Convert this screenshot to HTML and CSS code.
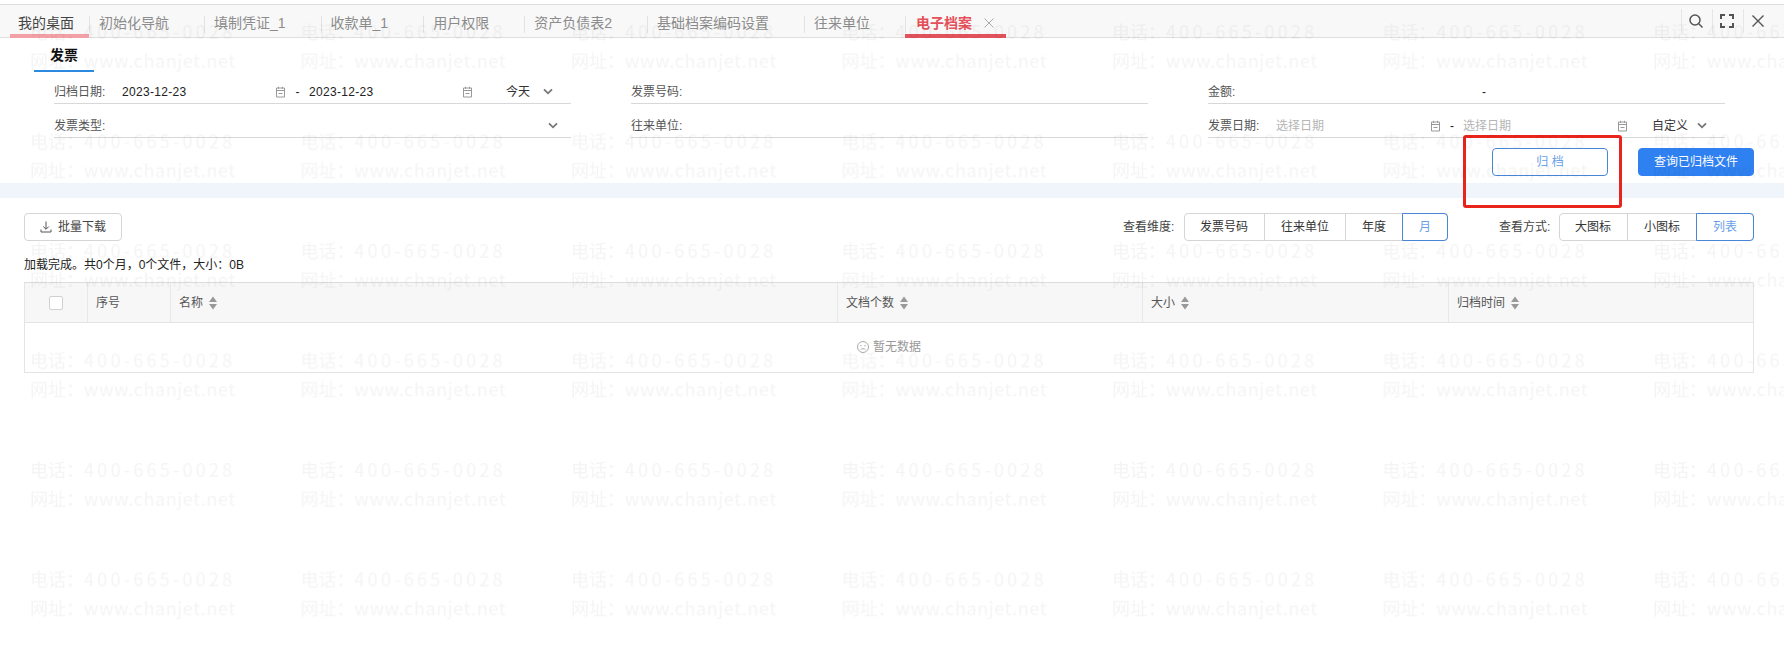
FILE: index.html
```html
<!DOCTYPE html>
<html lang="zh-CN">
<head>
<meta charset="utf-8">
<title>电子档案</title>
<link rel="stylesheet" href="styles.css">
</head>
<body>
<svg class="defs" width="0" height="0" aria-hidden="true">
  <symbol id="cal" viewBox="0 0 11 12"><path d="M1.500 2h8v9h-8zM1.500 4.500h8M3.500 .8v2M7.500 .8v2M3.500 7.500h4" fill="none" stroke="#999" stroke-width="1"/></symbol>
  <symbol id="chev" viewBox="0 0 10 7"><path d="M1 1.300l4 4 4-4" fill="none" stroke="#777" stroke-width="1.800"/></symbol>
  <symbol id="sort" viewBox="0 0 8 14"><path d="M4 .5l4 5.500H0zM4 13.500L0 8h8z" fill="#999"/></symbol>
</svg>
<div class="app">
  <header class="tabbar">
    <nav class="tabs">
      <a class="tab tab-home">我的桌面</a>
      <a class="tab">初始化导航</a>
      <a class="tab">填制凭证_1</a>
      <a class="tab">收款单_1</a>
      <a class="tab">用户权限</a>
      <a class="tab">资产负债表2</a>
      <a class="tab">基础档案编码设置</a>
      <a class="tab">往来单位</a>
      <a class="tab tab-active">电子档案<svg class="tab-x" width="10" height="10" viewBox="0 0 10 10"><path d="M.5.500l9 9M9.500.500l-9 9" stroke="#aaa" fill="none"/></svg></a>
    </nav>
    <div class="tools">
      <span class="tool"><svg width="16" height="16" viewBox="0 0 16 16"><circle cx="7" cy="7" r="5" fill="none" stroke="#555" stroke-width="1.500"/><path d="M10.800 10.800L14.500 14.500" stroke="#555" stroke-width="1.500"/></svg></span>
      <span class="tool"><svg width="14" height="14" viewBox="0 0 14 14"><path d="M1 5V1h4M9 1h4v4M13 9v4H9M5 13H1V9" fill="none" stroke="#555" stroke-width="2"/></svg></span>
      <span class="tool"><svg width="14" height="14" viewBox="0 0 14 14"><path d="M1.500 1.500l11 11M12.500 1.500l-11 11" fill="none" stroke="#555" stroke-width="1.400"/></svg></span>
    </div>
  </header>

  <div class="subtabs"><span class="subtab">发票</span></div>

  <section class="filters">
    <div class="field">
      <label class="label">归档日期:</label>
      <span class="date"><span>2023-12-23</span><svg class="cal"><use href="#cal"/></svg></span>
      <span class="dash">-</span>
      <span class="date"><span>2023-12-23</span><svg class="cal"><use href="#cal"/></svg></span>
      <span class="preset">今天<svg class="chev"><use href="#chev"/></svg></span>
    </div>
    <div class="field"><label class="label">发票号码:</label></div>
    <div class="field">
      <label class="label">金额:</label>
      <span class="amount-dash">-</span>
    </div>
    <div class="field">
      <label class="label">发票类型:</label>
      <svg class="chev chev-select"><use href="#chev"/></svg>
    </div>
    <div class="field"><label class="label">往来单位:</label></div>
    <div class="field">
      <label class="label">发票日期:</label>
      <span class="date date-empty"><span>选择日期</span><svg class="cal"><use href="#cal"/></svg></span>
      <span class="dash dash-tight">-</span>
      <span class="date date-empty"><span>选择日期</span><svg class="cal"><use href="#cal"/></svg></span>
      <span class="preset preset-wide">自定义<svg class="chev"><use href="#chev"/></svg></span>
    </div>
  </section>

  <div class="actions">
    <button class="btn btn-outline">归 档</button>
    <button class="btn btn-primary">查询已归档文件</button>
  </div>

  <div class="band"></div>

  <div class="toolbar">
    <button class="btn btn-download"><svg width="12" height="12" viewBox="0 0 12 12"><path d="M6 .5v7.500M3.200 5.500L6 8.300l2.800-2.800M1 8.500v2.500h10V8.500" fill="none" stroke="#555"/></svg>批量下载</button>
    <div class="view-controls">
      <span class="view-label">查看维度:</span>
      <div class="seg">
        <span class="seg-item">发票号码</span>
        <span class="seg-item">往来单位</span>
        <span class="seg-item">年度</span>
        <span class="seg-item seg-on">月</span>
      </div>
      <span class="view-label view-label-second">查看方式:</span>
      <div class="seg">
        <span class="seg-item">大图标</span>
        <span class="seg-item">小图标</span>
        <span class="seg-item seg-on">列表</span>
      </div>
    </div>
  </div>

  <p class="status">加载完成。共0个月&#xFF0C;0个文件&#xFF0C;大小&#xFF1A;0B</p>

  <section class="table">
    <div class="thead">
      <div class="th th-check"><span class="checkbox"></span></div>
      <div class="th">序号</div>
      <div class="th">名称<svg class="sort"><use href="#sort"/></svg></div>
      <div class="th">文档个数<svg class="sort"><use href="#sort"/></svg></div>
      <div class="th">大小<svg class="sort"><use href="#sort"/></svg></div>
      <div class="th">归档时间<svg class="sort"><use href="#sort"/></svg></div>
    </div>
    <div class="empty">
      <svg width="12" height="12" viewBox="0 0 12 12"><circle cx="6" cy="6" r="5.500" fill="none" stroke="#aaa"/><circle cx="4" cy="4.800" r=".7" fill="#aaa"/><circle cx="8" cy="4.800" r=".7" fill="#aaa"/><path d="M3.500 8.800c1.200-1.500 3.800-1.500 5 0" fill="none" stroke="#aaa"/></svg>
      <span>暂无数据</span>
    </div>
  </section>
</div>

<div class="annotation"></div>

<svg class="watermark" width="1784" height="651" aria-hidden="true">
  <defs>
    <pattern id="wm" x="30" y="21" width="270.500" height="109.500" patternUnits="userSpaceOnUse">
      <text class="wm-text" x="0" y="18">电话&#xFF1A;<tspan class="wm-phone">400-665-0028</tspan></text>
      <text class="wm-text" x="0" y="47">网址&#xFF1A;<tspan class="wm-url">www.chanjet.net</tspan></text>
    </pattern>
  </defs>
  <rect width="1784" height="651" fill="url(#wm)"/>
</svg>
</body>
</html>
```

FILE: styles.css
```css
* { box-sizing: border-box; }
html, body { margin: 0; padding: 0; }
body {
  position: relative;
  width: 1784px;
  height: 651px;
  overflow: hidden;
  background: #fff;
  color: #333;
  font: 12px/18px "Liberation Sans", "Noto Sans CJK SC", sans-serif;
}
.defs { position: absolute; }

/* tab bar */
.tabbar {
  display: flex;
  justify-content: space-between;
  height: 34px;
  margin-top: 4px;
  background: #f8f8f8;
  border-top: 1px solid #dedede;
  border-bottom: 1px solid #dedede;
}
.tabs { display: flex; }
.tab {
  position: relative;
  display: flex;
  align-items: center;
  height: 32px;
  padding: 3px 35px 0 10px;
  font-size: 14px;
  white-space: nowrap;
  color: #8c8c8c;
}
.tab::before {
  content: "";
  position: absolute;
  left: 0;
  top: 11px;
  height: 17px;
  border-left: 1px solid #e2e2e2;
}
.tab-home { padding: 3px 15px 0 18px; color: #444; width: 89px; }
.tab-home::before { display: none; }
.tab-home::after {
  content: "";
  position: absolute;
  left: 10px;
  width: 79px;
  bottom: -1px;
  height: 4px;
  background: #f4a0a8;
}
.tab-active { padding: 3px 12px 0 11px; color: #e5505a; font-weight: 700; width: 101px; }
.tab-active::after {
  content: "";
  position: absolute;
  left: 0;
  right: 0;
  bottom: -1px;
  height: 4px;
  background: #e2525c;
}
.tab-x { margin-left: 12px; }
.tools { display: flex; margin-right: 10px; }
.tool {
  position: relative;
  display: flex;
  align-items: center;
  justify-content: center;
  width: 31px;
  height: 24px;
  margin-top: 4px;
  padding-right: 3px;
  border-left: 1px solid #e6e6e6;
}

/* sub tab */
.subtabs { height: 34px; padding-left: 34px; }
.subtab {
  display: block;
  width: 60px;
  height: 34px;
  padding-top: 8px;
  text-align: center;
  font-size: 14px;
  font-weight: 700;
  color: #111;
  border-bottom: 2px solid #2b8ae0;
}

/* filters */
.filters {
  display: grid;
  grid-template-columns: repeat(3, 517px);
  column-gap: 60px;
  row-gap: 11px;
  padding: 9px 0 0 54px;
}
.field {
  display: flex;
  align-items: center;
  height: 23px;
  padding-bottom: 1px;
  border-bottom: 1px solid #d8d8d8;
}
.label { width: 68px; flex: none; color: #555; }
.date {
  display: flex;
  align-items: center;
  justify-content: space-between;
  width: 164px;
  letter-spacing: .3px;
  color: #222;
}
.date-empty { color: #b5b5b5; letter-spacing: 0; width: 165px; }
.cal { width: 11px; height: 12px; }
.dash { width: 23px; text-align: center; color: #222; }
.dash-tight { width: 22px; }
.preset {
  display: flex;
  align-items: center;
  gap: 13px;
  margin-left: auto;
  margin-right: 18px;
  color: #333;
}
.preset-wide { gap: 9px; }
.chev { width: 10px; height: 7px; }
.chev-select { margin-left: auto; margin-right: 13px; }
.amount-dash { margin-left: 206px; color: #222; }

/* buttons */
.actions {
  display: flex;
  justify-content: flex-end;
  gap: 30px;
  padding: 10px 30px 7px 0;
}
.btn {
  display: flex;
  align-items: center;
  justify-content: center;
  height: 28px;
  width: 116px;
  border-radius: 4px;
  font: inherit;
}
.btn-outline { background: transparent; border: 1px solid #4a86d8; color: #6a9fe8; }
.btn-primary { background: #2f80f0; border: 1px solid #2f80f0; color: #fff; }
.band { height: 15px; background: #f0f5fb; }

/* toolbar */
.toolbar {
  display: flex;
  justify-content: space-between;
  padding: 15px 30px 0 24px;
}
.btn-download {
  width: 98px;
  gap: 6px;
  background: #fff;
  border: 1px solid #d5d5d5;
  color: #444;
}
.view-controls { display: flex; align-items: center; }
.view-label { width: 53px; margin-right: 8px; color: #444; }
.view-label-second { margin-left: 51px; margin-right: 7px; }
.seg {
  display: flex;
  height: 28px;
  border: 1px solid #d5d5d5;
  border-radius: 4px;
  background: #fff;
}
.seg-item {
  display: flex;
  align-items: center;
  padding: 0 16px;
  color: #333;
  border-left: 1px solid #d5d5d5;
}
.seg-item:first-child { border-left: 0; padding-left: 15px; }
.seg-on {
  position: relative;
  color: #6a9fe8;
  margin: -1px -1px -1px 0;
  border: 1px solid #4a86d8;
  border-radius: 0 4px 4px 0;
  padding: 0 16px;
}

.status { margin: 15px 0 8px 24px; color: #222; }

/* table */
.table {
  width: 1730px;
  margin-left: 24px;
  border: 1px solid #e4e4e4;
  border-top-color: #dcdcdc;
}
.thead {
  display: grid;
  grid-template-columns: 62px 83px 667px 305px 306px 1fr;
  height: 40px;
  background: #f7f7f7;
  border-bottom: 1px solid #e4e4e4;
}
.th {
  display: flex;
  align-items: center;
  gap: 6px;
  padding-left: 8px;
  color: #555;
  border-left: 1px solid #e8e8e8;
}
.th-check { border-left: 0; padding-left: 24px; }
.checkbox {
  width: 14px;
  height: 14px;
  background: #fff;
  border: 1px solid #d0d0d0;
  border-radius: 2px;
}
.sort { width: 8px; height: 14px; }
.empty {
  display: flex;
  align-items: center;
  gap: 4px;
  height: 49px;
  padding: 0 0 2px 832px;
  color: #999;
}

/* overlays */
.annotation {
  position: absolute;
  left: 1463px;
  top: 135px;
  width: 159px;
  height: 73px;
  border: 3px solid #e8241c;
  border-radius: 3px;
  pointer-events: none;
}
.watermark {
  position: absolute;
  left: 0;
  top: 0;
  pointer-events: none;
}
.wm-text {
  font: 18px "Noto Sans CJK SC", sans-serif;
  fill: rgba(0, 0, 0, .045);
}
.wm-phone { letter-spacing: 3.25px; }
.wm-url { letter-spacing: .6px; }
```
